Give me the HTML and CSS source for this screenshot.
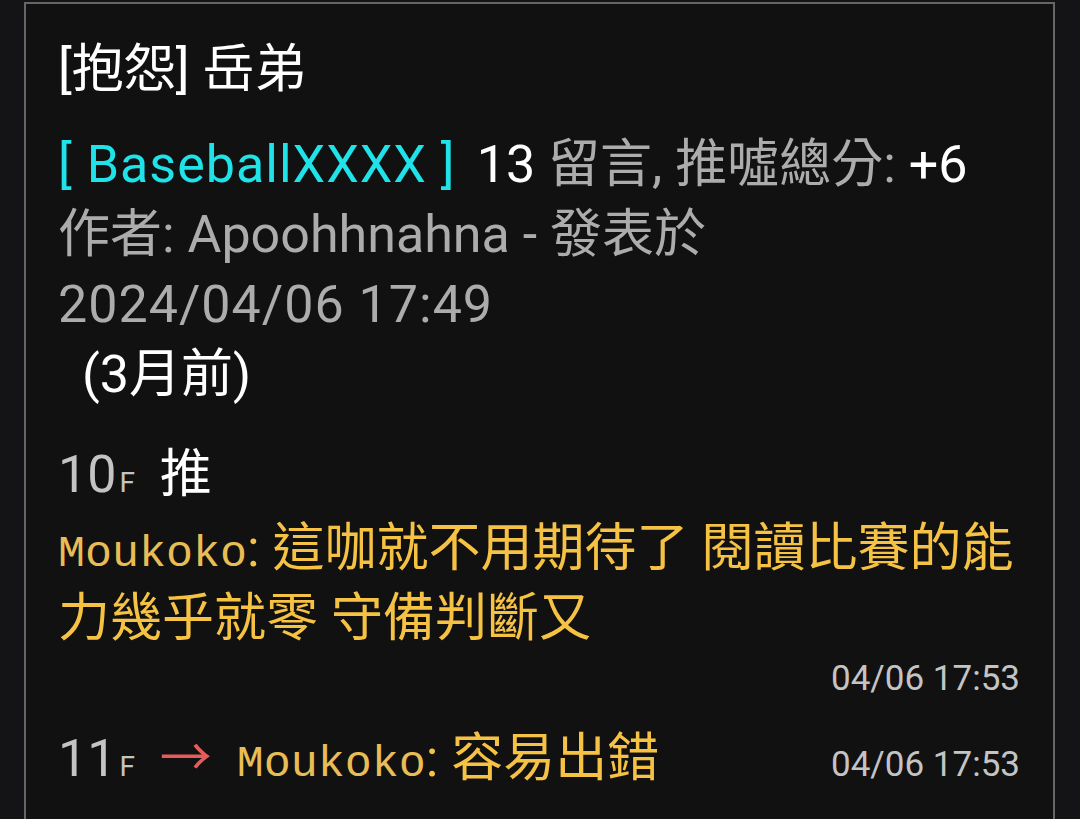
FILE: index.html
```html
<!DOCTYPE html>
<html lang="zh-Hant">
<head>
    <meta charset="UTF-8">
    <meta name="viewport" content="width=device-width, initial-scale=1.0">
    <title>[抱怨] 岳弟</title>
    <link rel="stylesheet" href="styles.css">
</head>
<body>
    <div class="card">
        <h1 class="title">[抱怨] 岳弟</h1>
        <div class="meta">
            <span class="board">[ BaseballXXXX ]</span><span class="count">13</span> <span class="dim">留言, 推噓總分:</span> <span class="score">+6</span><br>
            <span class="dim">作者: Apoohhnahna - 發表於 <span class="date">2024/04/06 17:49</span></span>
            <div class="ago">(3月前)</div>
        </div>

        <div class="push">
            <div class="push-head">
                <span class="floor">10<small>F</small></span>
                <span class="tag">推</span>
            </div>
            <div class="push-body push-text"><span class="user">Moukoko</span>: 這咖就不用期待了 閱讀比賽的能力幾乎就零 守備判斷又</div>
            <div class="push-time">04/06 17:53</div>
        </div>

        <div class="push push-row">
            <div class="push-line">
                <span class="floor">11<small>F</small></span>
                <span class="arrow">→</span>
                <span class="push-body"><span class="user">Moukoko</span>: 容易出錯</span>
            </div>
            <div class="push-time">04/06 17:53</div>
        </div>
    </div>
</body>
</html>
```

FILE: styles.css
```css
body {
    margin: 0;
    background-color: #141416;
    font-family: Roboto, "Noto Sans CJK TC", sans-serif;
    color: #fff;
}
.card {
    width: 1031px;
    margin: 2px 0 0 24px;
    box-sizing: border-box;
    min-height: 830px;
    padding: 31px 33px 0 32px;
    background-color: #111111;
    border: 2px solid #666;
    border-bottom: none;
}
.title {
    margin: 0;
    font-size: 52px;
    font-weight: normal;
    line-height: 70px;
}
.meta {
    margin-top: 25px;
    font-size: 52px;
    line-height: 70px;
}
.board {
    color: #1fe3e8;
    letter-spacing: 1px;
    margin-right: 21px;
}
.dim {
    color: #acacac;
}
.date {
    white-space: nowrap;
    letter-spacing: 1px;
}
.ago {
    padding-left: 24px;
}
.push {
    margin-top: 30px;
}
.push-head {
    font-size: 52px;
    line-height: 70px;
}
.floor {
    color: #c4c4c4;
}
.floor small {
    font-size: 28px;
    line-height: 1;
    margin-left: 3px;
}
.tag {
    margin-left: 12px;
}
.push-body {
    font-size: 52px;
    line-height: 70px;
    color: #f6c244;
}
.push-text {
    margin-top: 4px;
}
.user {
    font-family: "Liberation Mono", monospace;
    font-size: 45px;
    line-height: 1;
    color: #e8bd55;
}
.push-time {
    font-size: 35px;
    line-height: 50px;
    color: #c4c4c4;
    text-align: right;
}
.push-row {
    display: flex;
    justify-content: space-between;
    align-items: baseline;
    margin-top: 20px;
}
.push-line {
    font-size: 52px;
    line-height: 70px;
}
.arrow {
    color: #e55c5c;
    margin: 0 12px;
}
```
